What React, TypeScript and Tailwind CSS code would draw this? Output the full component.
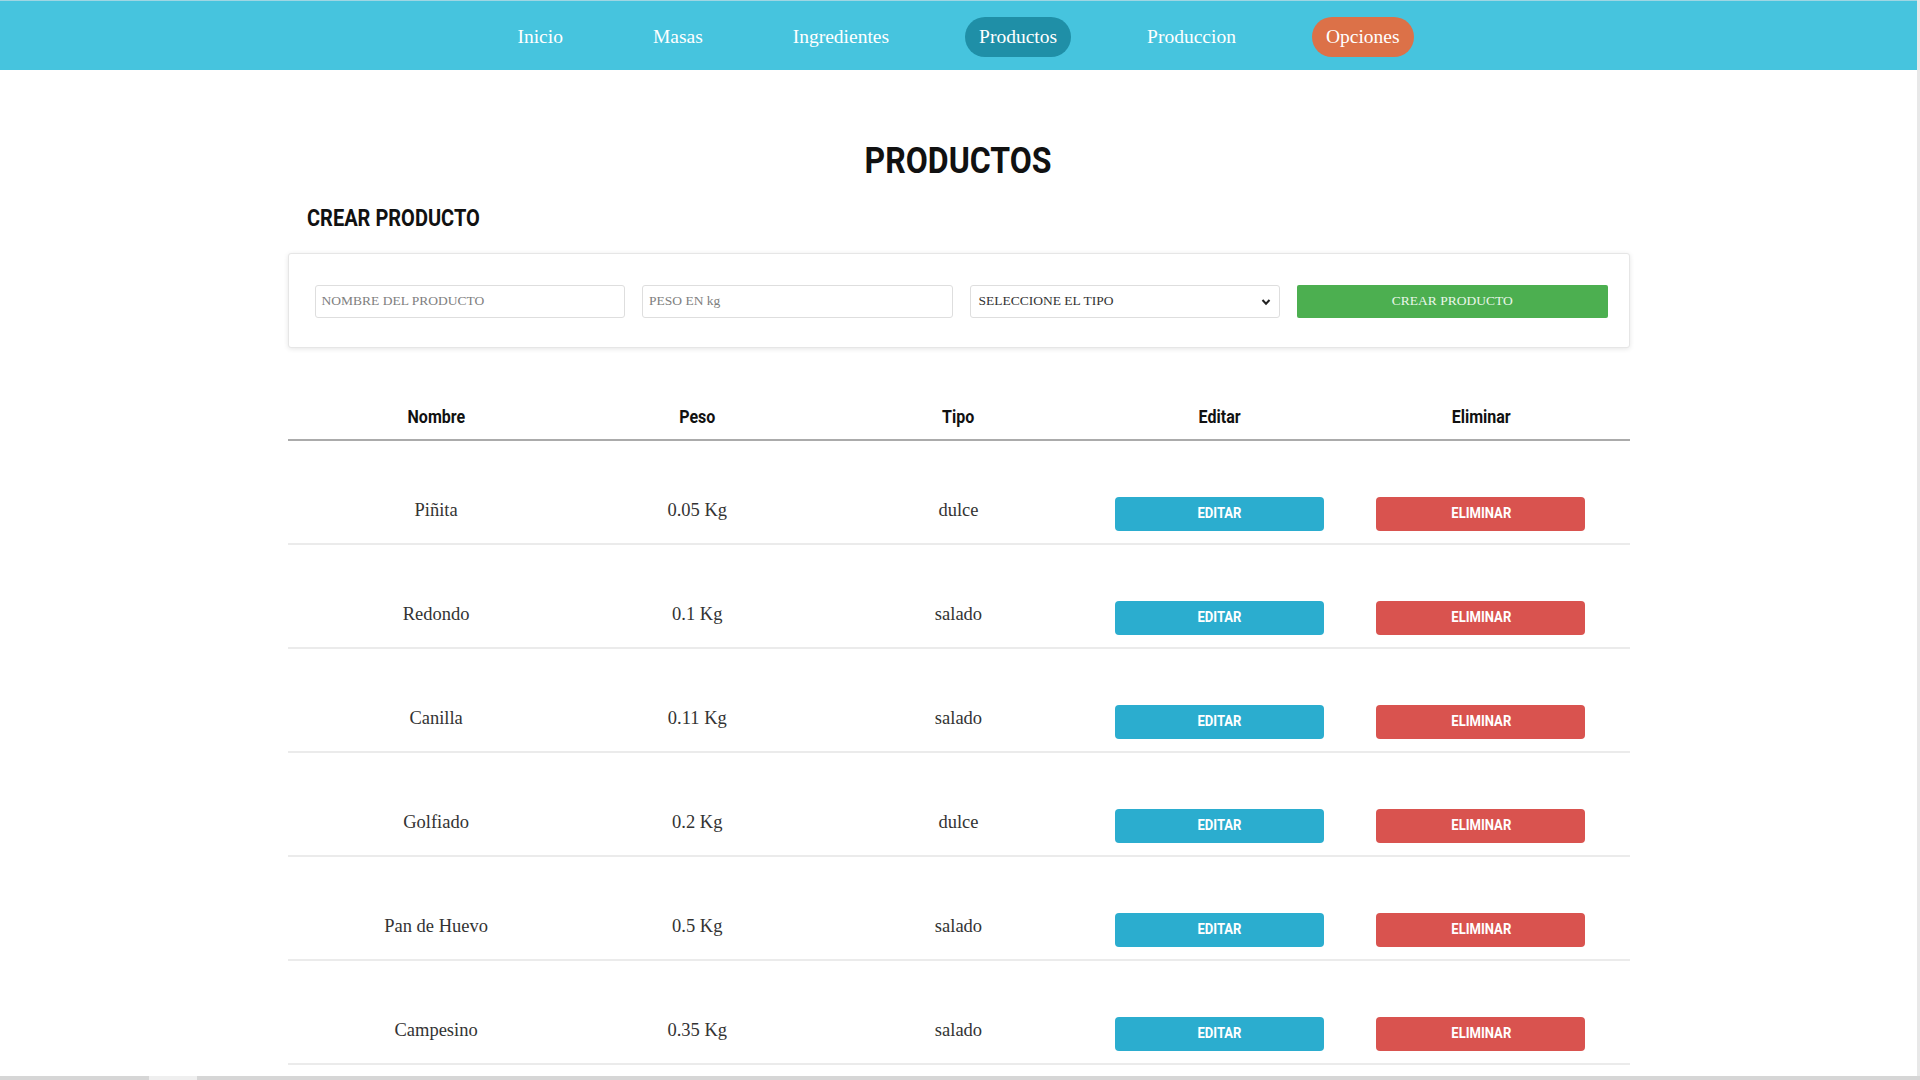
import React from "react";

const serif = { fontFamily: '"Liberation Serif", "DejaVu Serif", serif' };
const sans = { fontFamily: 'Roboto, "Liberation Sans", sans-serif' };

const navItems = [
  { label: "Inicio", kind: "plain" },
  { label: "Masas", kind: "plain" },
  { label: "Ingredientes", kind: "plain" },
  { label: "Productos", kind: "active" },
  { label: "Produccion", kind: "plain" },
  { label: "Opciones", kind: "accent" },
];

const productos = [
  { nombre: "Piñita", peso: "0.05 Kg", tipo: "dulce" },
  { nombre: "Redondo", peso: "0.1 Kg", tipo: "salado" },
  { nombre: "Canilla", peso: "0.11 Kg", tipo: "salado" },
  { nombre: "Golfiado", peso: "0.2 Kg", tipo: "dulce" },
  { nombre: "Pan de Huevo", peso: "0.5 Kg", tipo: "salado" },
  { nombre: "Campesino", peso: "0.35 Kg", tipo: "salado" },
];

function Nav() {
  return (
    <nav className="h-[70px] shrink-0 bg-[#46c4de] border-t border-[#9fd6e3] pt-[3px] flex items-center justify-center gap-[62px]">
      {navItems.map((it) => (
        <a
          key={it.label}
          style={serif}
          className={
            "h-[40px] px-[14px] rounded-full flex items-center text-[19.5px] text-white " +
            (it.kind === "active"
              ? "bg-[#1f8fa7]"
              : it.kind === "accent"
              ? "bg-[#dc7148]"
              : "")
          }
        >
          {it.label}
        </a>
      ))}
    </nav>
  );
}

function Field({ text, dark }: { text: string; dark?: boolean }) {
  return (
    <div
      style={serif}
      className={
        "h-[33px] border border-[#dedede] rounded-[3px] bg-white flex items-center px-[6px] text-[13.5px] " +
        (dark ? "text-[#333]" : "text-[#808080]")
      }
    >
      {text}
    </div>
  );
}

function CreateCard() {
  return (
    <div className="h-[95px] border border-[#e6e6e6] rounded-[3px] bg-white shadow-[0_1px_5px_rgba(0,0,0,0.10)] flex items-center pl-[26px] pr-[21px] pt-[2px]">
      <div className="grid grid-cols-4 gap-[17px] w-full">
        <Field text="NOMBRE DEL PRODUCTO" />
        <Field text="PESO EN kg" />
        <div
          style={serif}
          className="h-[33px] border border-[#dedede] rounded-[3px] bg-white flex items-center justify-between pl-[8px] pr-[8px] text-[13.5px] text-[#333]"
        >
          <span>SELECCIONE EL TIPO</span>
          <svg width="10" height="8" viewBox="0 0 10 8">
            <path d="M1.5 2 L5 5.8 L8.5 2" fill="none" stroke="#222" strokeWidth="2" />
          </svg>
        </div>
        <div
          style={serif}
          className="h-[33px] rounded-[2px] bg-[#4caf50] flex items-center justify-center text-[13.5px] text-[#eaf6ea]"
        >
          CREAR PRODUCTO
        </div>
      </div>
    </div>
  );
}

function HeadCell({ children }: { children: React.ReactNode }) {
  return (
    <div className="flex justify-center">
      <span style={sans} className="inline-block text-[18px] leading-[24px] font-bold text-[#111] scale-x-[0.89]">
        {children}
      </span>
    </div>
  );
}

function ActionButton({ label, color }: { label: string; color: string }) {
  return (
    <div className="flex justify-center">
      <div className={"w-[209px] h-[34px] rounded-[4px] flex items-center justify-center " + color}>
        <span style={sans} className="inline-block text-[14.5px] font-bold text-white scale-x-[0.9]">
          {label}
        </span>
      </div>
    </div>
  );
}

function Table() {
  return (
    <div className="mt-[57px]">
      <div className="grid grid-cols-5 px-[18px] pb-[10px] border-b-2 border-[#ababab]">
        <HeadCell>Nombre</HeadCell>
        <HeadCell>Peso</HeadCell>
        <HeadCell>Tipo</HeadCell>
        <HeadCell>Editar</HeadCell>
        <HeadCell>Eliminar</HeadCell>
      </div>
      {productos.map((p) => (
        <div
          key={p.nombre}
          className="grid grid-cols-5 items-center px-[18px] pt-[56px] pb-[12px] border-b-2 border-[#ebebeb]"
        >
          <div style={serif} className="text-center text-[18.5px] text-[#333] -mt-[6px]">{p.nombre}</div>
          <div style={serif} className="text-center text-[18.5px] text-[#333] -mt-[6px]">{p.peso}</div>
          <div style={serif} className="text-center text-[18.5px] text-[#333] -mt-[6px]">{p.tipo}</div>
          <ActionButton label="EDITAR" color="bg-[#2badcf]" />
          <ActionButton label="ELIMINAR" color="bg-[#d9534f]" />
        </div>
      ))}
    </div>
  );
}

export default function App() {
  return (
    <div className="relative h-[1080px] w-full overflow-hidden bg-white flex">
      <div className="flex-1 flex flex-col min-w-0">
        <Nav />
        <main className="w-[1342px] mx-auto pt-[70px]">
          <div className="flex justify-center">
            <h1 style={sans} className="inline-block text-[36px] leading-[42px] font-bold text-[#111] scale-x-[0.89]">
              PRODUCTOS
            </h1>
          </div>
          <div className="mt-[23px] pl-[19px] h-[28px]">
            <h2 style={sans} className="inline-block origin-left text-[23px] leading-[28px] font-bold text-[#111] scale-x-[0.87]">
              CREAR PRODUCTO
            </h2>
          </div>
          <div className="mt-[20px]">
            <CreateCard />
          </div>
          <Table />
        </main>
      </div>
      <div className="w-[3px] shrink-0 bg-[#e8e8e8]" />
      <div className="absolute left-0 right-0 bottom-0 h-[4px] bg-[#d6d6d6]">
        <div className="absolute left-[149px] top-0 h-[4px] w-[48px] bg-[#efefef]" />
      </div>
    </div>
  );
}
